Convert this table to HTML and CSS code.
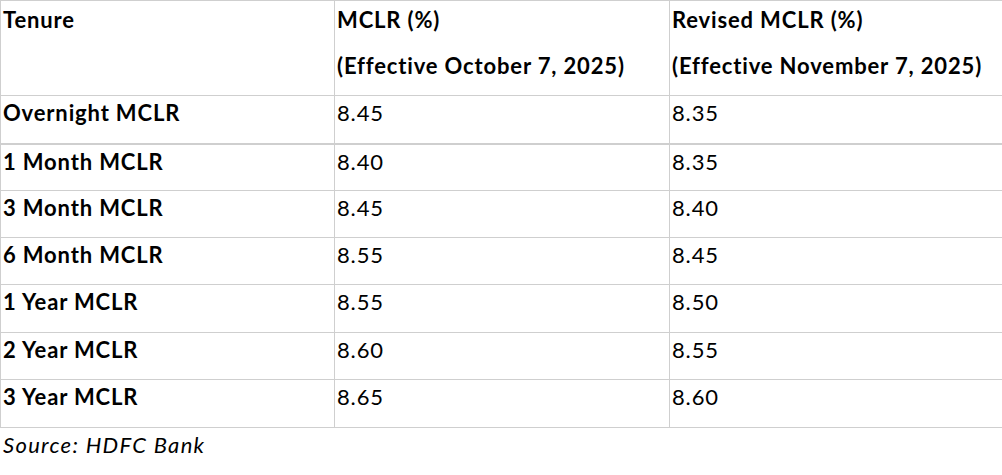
FILE: index.html
```html
<!DOCTYPE html>
<html lang="en">
<head>
<meta charset="utf-8">
<title>HDFC Bank MCLR</title>
<link rel="stylesheet" href="styles.css">
</head>
<body>
<table class="rates">
  <tr class="head">
    <td class="c1"><p>Tenure</p></td>
    <td class="c2"><p>MCLR (%)</p><p class="second">(Effective October 7, 2025)</p></td>
    <td class="c3"><p>Revised MCLR (%)</p><p class="second">(Effective November 7, 2025)</p></td>
  </tr>
  <tr class="r48 thick"><th>Overnight MCLR</th><td>8.45</td><td>8.35</td></tr>
  <tr class="r47"><th>1 Month MCLR</th><td>8.40</td><td>8.35</td></tr>
  <tr class="r47"><th>3 Month MCLR</th><td>8.45</td><td>8.40</td></tr>
  <tr class="r47"><th>6 Month MCLR</th><td>8.55</td><td>8.45</td></tr>
  <tr class="r48"><th>1 Year MCLR</th><td>8.55</td><td>8.50</td></tr>
  <tr class="r47"><th>2 Year MCLR</th><td>8.60</td><td>8.55</td></tr>
  <tr class="r48"><th>3 Year MCLR</th><td>8.65</td><td>8.60</td></tr>
</table>
<p class="source">Source: HDFC Bank</p>
</body>
</html>
```
FILE: styles.css
```css
html, body {
  margin: 0;
  padding: 0;
  background: #ffffff;
}
body {
  font-family: Lato, "Open Sans", sans-serif;
  color: #000;
  width: 1002px;
  height: 475px;
  overflow: hidden;
}
.rates {
  border-collapse: collapse;
  table-layout: fixed;
  width: 1010px;
}
.rates td, .rates th {
  border: 1px solid #cfcfcf;
  padding: 0 0 0 2px;
  vertical-align: top;
  text-align: left;
  font-size: 22px;
  line-height: 26px;
  letter-spacing: 0.85px;
}
.rates th {
  font-weight: 700;
}
.rates td {
  font-weight: 400;
}
.rates .c1 { width: 331px; }
.rates .c2 { width: 332px; }
.head td {
  height: 94px;
  font-weight: 700;
}
.head p {
  margin: 0;
  padding-top: 6px;
}
.head p.second {
  padding-top: 20px;
}
.rates tr.r47 > * {
  height: 47px;
  padding-top: 4px;
  box-sizing: border-box;
}
.rates tr.r48 > * {
  height: 48px;
  padding-top: 4px;
  box-sizing: border-box;
}
.rates tr.thick > * {
  border-bottom: 2px solid #cfcfcf;
}
.source {
  margin: 4px 0 0 3px;
  font-style: italic;
  font-size: 22px;
  line-height: 26px;
  letter-spacing: 1.3px;
}
```
